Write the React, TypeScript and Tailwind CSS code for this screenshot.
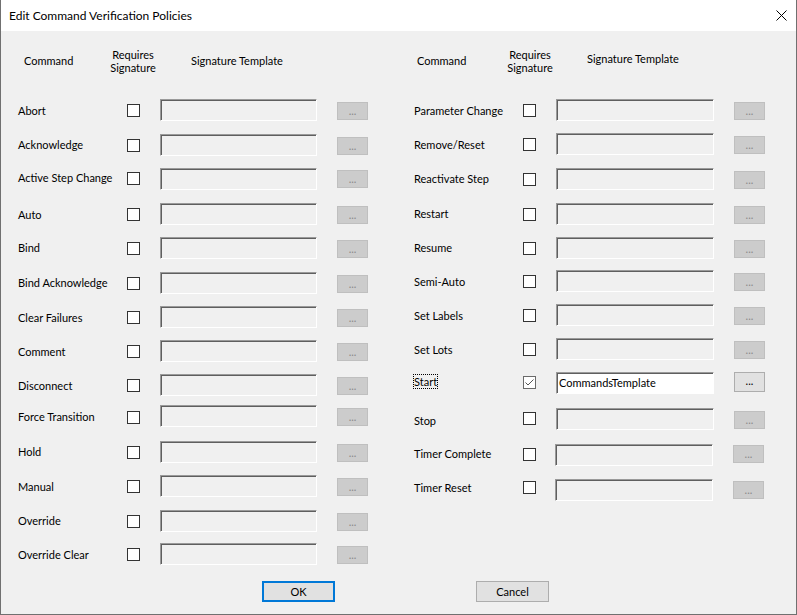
type Row = {
  name: string;
  h: string;
  lm?: string;
  cm?: string;
  bm?: string;
  checked?: boolean;
  value?: string;
  focus?: boolean;
  shift?: boolean;
};

const leftRows: Row[] = [
  { name: "Abort", h: "h-[35px]" },
  { name: "Acknowledge", h: "h-[34px]", lm: "mt-[3px]" },
  { name: "Active Step Change", h: "h-[35px]", lm: "mt-[2px]", cm: "mt-[4px]", bm: "mt-[2px]" },
  { name: "Auto", h: "h-[34px]" },
  { name: "Bind", h: "h-[35px]", lm: "mt-[3px]" },
  { name: "Bind Acknowledge", h: "h-[34px]", lm: "mt-[3px]" },
  { name: "Clear Failures", h: "h-[34px]" },
  { name: "Comment", h: "h-[34px]" },
  { name: "Disconnect", h: "h-[31px]" },
  { name: "Force Transition", h: "h-[36px]", lm: "mt-[4px]", cm: "mt-[6px]" },
  { name: "Hold", h: "h-[34px]", lm: "mt-[3px]" },
  { name: "Manual", h: "h-[35px]" },
  { name: "Override", h: "h-[33px]", lm: "mt-[3px]" },
  { name: "Override Clear", h: "h-[38px]", lm: "mt-[4px]" },
];

const rightRows: Row[] = [
  { name: "Parameter Change", h: "h-[34px]" },
  { name: "Remove/Reset", h: "h-[35px]" },
  { name: "Reactivate Step", h: "h-[35px]", lm: "mt-[3px]" },
  { name: "Restart", h: "h-[34px]", lm: "mt-[3px]" },
  { name: "Resume", h: "h-[33px]", lm: "mt-[3px]" },
  { name: "Semi-Auto", h: "h-[34px]", lm: "mt-[4px]" },
  { name: "Set Labels", h: "h-[34px]" },
  { name: "Set Lots", h: "h-[34px]" },
  { name: "Start", h: "h-[36px]", lm: "mt-[2px]", cm: "mt-[4px]", bm: "mt-[0px]", checked: true, value: "CommandsTemplate", focus: true },
  { name: "Stop", h: "h-[36px]", lm: "mt-[5px]", cm: "mt-[4px]" },
  { name: "Timer Complete", h: "h-[35px]", lm: "mt-[2px]", cm: "mt-[4px]", bm: "mt-[1px]", shift: true },
  { name: "Timer Reset", h: "h-[22px]", lm: "mt-[1px]", cm: "mt-[2px]", bm: "mt-[2px]", shift: true },
];

function CommandRow({ row }: { row: Row }) {
  const enabled = !!row.checked;
  return (
    <div className={`flex items-start ${row.h}`}>
      <div className={`w-[109px] leading-[16px] ${row.lm ?? "mt-[4px]"}`}>
        {row.focus ? (
          <span className="outline outline-1 outline-dotted outline-black">{row.name}</span>
        ) : (
          row.name
        )}
      </div>
      <div className={row.shift ? "w-[32px]" : "w-[33px]"}>
        <div
          className={`w-[13px] h-[13px] bg-white border flex items-center justify-center ${
            enabled ? "border-[#6a6a6a]" : "border-[#333333]"
          } ${row.cm ?? "mt-[5px]"}`}
        >
          {enabled && (
            <svg width="11" height="11" viewBox="0 0 11 11">
              <path d="M1.5 5.5 L4 8 L9.5 2.5" fill="none" stroke="#555555" strokeWidth="1" />
            </svg>
          )}
        </div>
      </div>
      <div
        className={`w-[158px] h-[22px] border-t border-l border-t-[#9a9a9a] border-l-[#9a9a9a] border-r border-b border-r-white border-b-white shadow-[inset_1px_1px_0_#5f5f5f] pl-[2px] leading-[19px] ${
          enabled ? "bg-white" : "bg-[#f0f0f0]"
        }`}
      >
        {row.value}
      </div>
      {enabled ? (
        <div
          className={`ml-[20px] w-[31px] h-[20px] bg-[#e1e1e1] border border-[#adadad] flex justify-center leading-[16px] text-black ${
            row.bm ?? "mt-[3px]"
          }`}
        >
          ...
        </div>
      ) : (
        <div
          className={`ml-[20px] w-[31px] h-[18px] bg-[#cccccc] border border-[#bfbfbf] flex justify-center leading-[15px] text-[#8a8a8a] ${
            row.bm ?? "mt-[3px]"
          }`}
        >
          ...
        </div>
      )}
    </div>
  );
}

function HeaderRow({ first, sigOffset }: { first: string; sigOffset: string }) {
  return (
    <div className="h-[68px] flex items-center pb-[8px]">
      <div className={`${first}`}>Command</div>
      <div className="w-[60px] flex flex-col items-center">
        <span className="leading-[13px]">Requires</span>
        <span className="leading-[13px]">Signature</span>
      </div>
      <div className={sigOffset}>Signature Template</div>
    </div>
  );
}

export default function App() {
  return (
    <div className="w-[797px] h-[615px] flex flex-col bg-[#f0f0f0] border-x border-b border-[#707070] font-['Lato',sans-serif] text-[11px] text-black">
      {/* Title bar */}
      <div className="h-[31px] bg-white flex items-center justify-between pl-[8px] pr-[9px]">
        <span className="text-[12px]">Edit Command Verification Policies</span>
        <svg width="11" height="11" viewBox="0 0 11 11">
          <path d="M0.5 0.5 L10.5 10.5 M10.5 0.5 L0.5 10.5" stroke="#000" strokeWidth="1" />
        </svg>
      </div>

      {/* Columns */}
      <div className="flex items-start pl-[17px]">
        <div className="w-[350px]">
          <HeaderRow first="w-[85px] pl-[6px]" sigOffset="pl-[28px]" />
          {leftRows.map((r) => (
            <CommandRow key={r.name} row={r} />
          ))}
        </div>
        <div className="ml-[46px] w-[352px]">
          <HeaderRow first="w-[86px] pl-[3px]" sigOffset="pl-[27px] mb-[4px]" />
          {rightRows.map((r) => (
            <CommandRow key={r.name} row={r} />
          ))}
        </div>
      </div>

      {/* Footer */}
      <div className="flex">
        <button
          type="button"
          className="ml-[261px] w-[73px] h-[21px] bg-[#e1e1e1] border-2 border-[#0078d7] leading-[16px]"
        >
          OK
        </button>
        <button
          type="button"
          className="ml-[141px] w-[73px] h-[21px] bg-[#e1e1e1] border border-[#adadad] leading-[18px]"
        >
          Cancel
        </button>
      </div>
    </div>
  );
}
